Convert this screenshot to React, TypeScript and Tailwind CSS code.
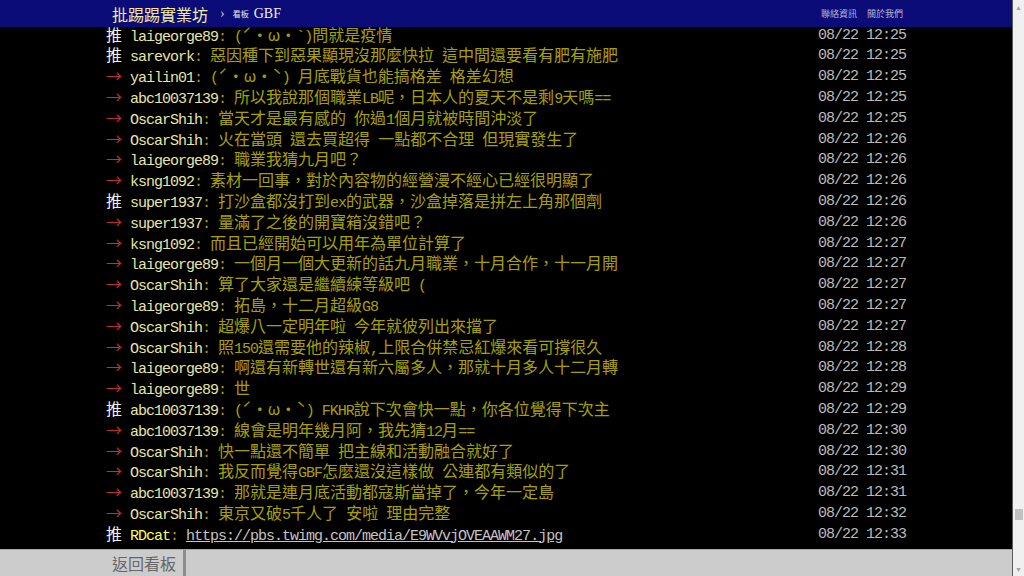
const mono = "font-['Liberation_Mono',monospace] text-[15px] tracking-[-1px]";
const cjk = "font-['Noto_Sans_CJK_TC','Noto_Sans',sans-serif] text-[16px]";

type Push = { tag: "推" | "→"; user: string; text: string; time: string; link?: boolean };

const pushes: Push[] = [
  { tag: "推", user: "laigeorge89", text: "(ˊ・ω・`)問就是疫情", time: "08/22 12:25" },
  { tag: "推", user: "sarevork", text: "惡因種下到惡果顯現沒那麼快拉 這中間還要看有肥有施肥", time: "08/22 12:25" },
  { tag: "→", user: "yailin01", text: "(ˊ・ω・ˋ) 月底戰貨也能搞格差 格差幻想", time: "08/22 12:25" },
  { tag: "→", user: "abc10037139", text: "所以我說那個職業LB呢，日本人的夏天不是剩9天嗎==", time: "08/22 12:25" },
  { tag: "→", user: "OscarShih", text: "當天才是最有感的 你過1個月就被時間沖淡了", time: "08/22 12:25" },
  { tag: "→", user: "OscarShih", text: "火在當頭 還去買超得 一點都不合理 但現實發生了", time: "08/22 12:26" },
  { tag: "→", user: "laigeorge89", text: "職業我猜九月吧？", time: "08/22 12:26" },
  { tag: "→", user: "ksng1092", text: "素材一回事，對於內容物的經營漫不經心已經很明顯了", time: "08/22 12:26" },
  { tag: "推", user: "super1937", text: "打沙盒都沒打到ex的武器，沙盒掉落是拼左上角那個劑", time: "08/22 12:26" },
  { tag: "→", user: "super1937", text: "量滿了之後的開寶箱沒錯吧？", time: "08/22 12:26" },
  { tag: "→", user: "ksng1092", text: "而且已經開始可以用年為單位計算了", time: "08/22 12:27" },
  { tag: "→", user: "laigeorge89", text: "一個月一個大更新的話九月職業，十月合作，十一月開", time: "08/22 12:27" },
  { tag: "→", user: "OscarShih", text: "算了大家還是繼續練等級吧 (", time: "08/22 12:27" },
  { tag: "→", user: "laigeorge89", text: "拓島，十二月超級G8", time: "08/22 12:27" },
  { tag: "→", user: "OscarShih", text: "超爆八一定明年啦 今年就彼列出來擋了", time: "08/22 12:27" },
  { tag: "→", user: "OscarShih", text: "照150還需要他的辣椒,上限合併禁忌紅爆來看可撐很久", time: "08/22 12:28" },
  { tag: "→", user: "laigeorge89", text: "啊還有新轉世還有新六屬多人，那就十月多人十二月轉", time: "08/22 12:28" },
  { tag: "→", user: "laigeorge89", text: "世", time: "08/22 12:29" },
  { tag: "推", user: "abc10037139", text: "(ˊ・ω・ˋ) FKHR說下次會快一點，你各位覺得下次主", time: "08/22 12:29" },
  { tag: "→", user: "abc10037139", text: "線會是明年幾月阿，我先猜12月==", time: "08/22 12:30" },
  { tag: "→", user: "OscarShih", text: "快一點還不簡單 把主線和活動融合就好了", time: "08/22 12:30" },
  { tag: "→", user: "OscarShih", text: "我反而覺得GBF怎麼還沒這樣做 公連都有類似的了", time: "08/22 12:31" },
  { tag: "→", user: "abc10037139", text: "那就是連月底活動都寇斯當掉了，今年一定島", time: "08/22 12:31" },
  { tag: "→", user: "OscarShih", text: "東京又破5千人了 安啦 理由完整", time: "08/22 12:32" },
  { tag: "推", user: "RDcat", text: "https://pbs.twimg.com/media/E9WVvjOVEAAWM27.jpg", time: "08/22 12:33", link: true },
];

// ascii runs get the half-width mono font, the rest falls to the CJK font
function Mixed({ s }: { s: string }) {
  return (
    <>
      {s.split(/([\x20-\x7e]+)/).map((part, i) =>
        part === "" ? null : /^[\x20-\x7e]+$/.test(part) ? (
          <span key={i} className={mono}>{part}</span>
        ) : (
          <span key={i} className={cjk}>{part}</span>
        )
      )}
    </>
  );
}

function PushRow({ p }: { p: Push }) {
  return (
    <div className="flex h-[20.8px] items-center leading-[20.8px] whitespace-pre">
      <div className="flex-1 min-w-0">
        <span className={p.tag === "推" ? `${cjk} text-[#f2f2f2]` : `${cjk} text-[#bf3030]`}>{p.tag}</span>
        <span className={mono}> </span>
        <span className={`${mono} ${p.link ? "text-[#ffff55]" : "text-[#e6e6a4]"}`}>{p.user}</span>
        <span className={`${mono} text-[#a9a000]`}>: </span>
        {p.link ? (
          <a className={`${mono} text-[#c4c4c4] underline`}>{p.text}</a>
        ) : (
          <span className="text-[#a9a000]">
            <Mixed s={p.text} />
          </span>
        )}
      </div>
      <span className={`${mono} text-[#bbbbbb]`}>{p.time}</span>
    </div>
  );
}

export default function App() {
  return (
    <div className="w-[1024px] h-[576px] flex bg-black overflow-hidden">
      <div className="flex-1 flex flex-col">
        <header className="h-[27px] bg-[#0c0c78] shrink-0">
          <div className="w-[800px] mx-auto h-full flex items-center">
            <span className={`${cjk} text-[#efeca2] pl-[6px]`}>批踢踢實業坊</span>
            <span className="font-['Liberation_Serif',serif] text-[14px] text-[#c8c8d8] ml-[12px]">›</span>
            <span className="font-['Noto_Sans_CJK_TC',sans-serif] text-[8px] text-[#e8e8e8] ml-[8px]">看板</span>
            <span className="font-['Liberation_Serif',serif] text-[14px] text-[#eeeeee] ml-[5px]">GBF</span>
            <div className="ml-auto flex gap-[10px] pr-[3px] font-['Noto_Sans_CJK_TC',sans-serif] text-[9px] text-[#b4b4d8]">
              <span>聯絡資訊</span>
              <span>關於我們</span>
            </div>
          </div>
        </header>
        <main className="flex-1 overflow-hidden">
          <div className="w-[800px] mx-auto mt-[-1.4px]">
            {pushes.map((p, i) => (
              <PushRow key={i} p={p} />
            ))}
          </div>
        </main>
        <footer className="h-[27px] shrink-0 bg-[#cccccc] border-t border-[#a8a8a8]">
          <div className="w-[800px] mx-auto h-full flex">
            <div className={`${cjk} text-[#666666] pl-[6px] pr-[7px] flex items-center border-r-[3px] border-[#8c8c8c]`}>
              返回看板
            </div>
          </div>
        </footer>
      </div>
      <div className="w-[12px] bg-[#f0f0f0] border-l border-[#5a5a5a] flex flex-col items-center relative">
        <span className="text-[7px] leading-none text-[#a3a3a3] mt-[4px]">▲</span>
        <div className="absolute top-[509px] left-[2px] w-[8px] h-[11px] bg-[#c1c1c1]" />
        <span className="text-[7px] leading-none text-[#a3a3a3] mt-auto mb-[3px]">▼</span>
      </div>
    </div>
  );
}
